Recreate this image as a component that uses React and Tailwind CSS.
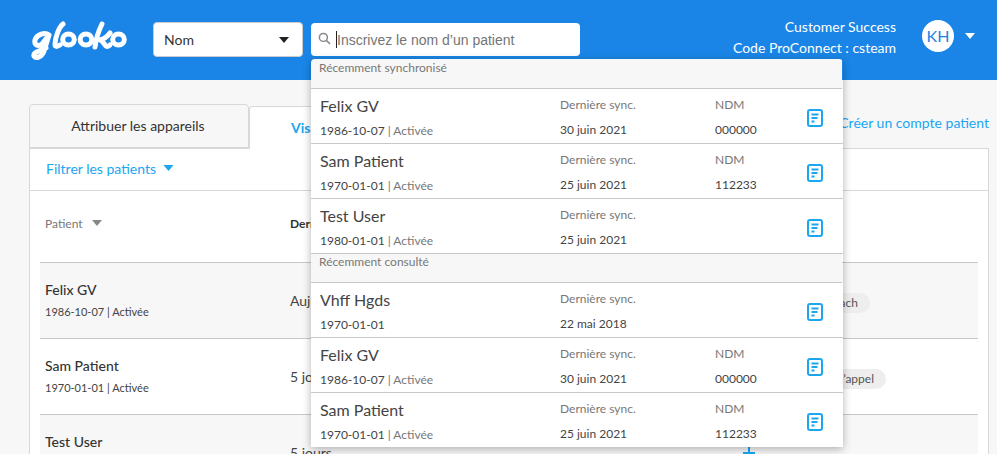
const Caret = ({ className }) => (
  <svg viewBox="0 0 10 6" className={className}><path d="M0 0h10L5 6z" fill="currentColor" /></svg>
);

const Logo = () => (
  <svg width="98" height="46" viewBox="0 0 98 46" fill="none" stroke="#fff" strokeWidth="5" strokeLinecap="round" strokeLinejoin="round">
    <path d="M20 20c-4-3-12-1-14 5-1 5 3 7 7 4l7-9-5 16c-2 6-8 8-10 5-1-3 4-5 12-8" />
    <path d="M34 9c-4 3-8 14-8 20 0 3 2 3 5 1" />
    <ellipse cx="39.5" cy="24.5" rx="5.8" ry="5.4" />
    <ellipse cx="57" cy="24.5" rx="5.8" ry="5.4" />
    <path d="M73 9c-3 6-6 15-7 23M81 18c-3 4-6 6-10 7 3 1 4 4 6 6 2 1 3 0 4-1" />
    <ellipse cx="89.5" cy="24.5" rx="5.8" ry="5.4" />
  </svg>
);

const NoteIcon = () => (
  <svg width="16" height="18" viewBox="0 0 16 18" fill="none" className="shrink-0">
    <rect x="1" y="1" width="14" height="16" rx="2" stroke="#1ba6f2" strokeWidth="2" />
    <path d="M4.5 5.5h7M4.5 9h6M4.5 12.5h3" stroke="#1ba6f2" strokeWidth="1.8" />
  </svg>
);

const SearchRow = ({ name, dob, status, date, ndm }) => (
  <div className="flex h-[55px] w-[532px] border-b border-[#c8c8c8] bg-white pl-[9px] last:h-[54px] last:border-b-0">
    <div className="w-[240px] pt-[7px]">
      <div className="text-[16px] leading-[20px] text-[#444]">{name}</div>
      <div className="mt-[7px] text-[12px] leading-[16px] text-[#444]">
        {dob}
        {status && <span className="text-[#777]"> | {status}</span>}
      </div>
    </div>
    <div className="w-[155px] pt-[7px]">
      <div className="text-[12px] leading-[18px] text-[#777]">Dernière sync.</div>
      <div className="mt-[8px] text-[12px] leading-[16px] text-[#444]">{date}</div>
    </div>
    <div className="w-[92px] pt-[7px]">
      {ndm && <div className="text-[12px] leading-[18px] text-[#777]">NDM</div>}
      {ndm && <div className="mt-[8px] text-[12px] leading-[16px] text-[#444]">{ndm}</div>}
    </div>
    <div className="pt-[20px]"><NoteIcon /></div>
  </div>
);

const SectionHead = ({ children, className }) => (
  <div className={`w-[531px] border-b border-[#c8c8c8] bg-[#f7f7f7] pl-[8px] text-[12px] text-[#777] ${className}`}>
    {children}
  </div>
);

const TableRow = ({ name, sub, last, chip, chipClass, shaded, plus }) => (
  <div className={`flex h-[76px] border-b border-[#c8c8c8] pl-[5px] ${shaded ? "bg-[#f7f7f7]" : "bg-white"}`}>
    <div className="w-[245px] pt-[17px]">
      <div className="text-[14px] font-medium leading-[20px] text-[#333]">{name}</div>
      <div className="mt-[3px] text-[11px] leading-[18px] text-[#444]">{sub}</div>
    </div>
    <div className="pt-[28px] text-[14px] leading-[20px] text-[#444]">{last}</div>
    {chip && (
      <div className={`ml-auto mt-[30px] h-[20px] rounded-full bg-[#eeeeee] pl-[16px] pr-[12px] text-[12px] leading-[20px] text-[#555] ${chipClass}`}>
        {chip}
      </div>
    )}
    {plus && (
      <svg width="12" height="12" viewBox="0 0 12 12" className="ml-auto mr-[223px] mt-[32px]" stroke="#1ba6f2" strokeWidth="2">
        <path d="M0 6h12M6 0v12" />
      </svg>
    )}
  </div>
);

export default function App() {
  return (
    <div className="relative h-[454px] w-[997px] overflow-hidden bg-[#f7f7f7] font-['Lato',sans-serif]">
      <header className="flex h-[80px] items-start bg-[#1a85e6] text-white">
        <div className="ml-[29px] mt-[15px] w-[124px]"><Logo /></div>
        <div className="mt-[22px] flex h-[35px] w-[150px] items-center justify-between rounded-[4px] border border-[#cccccc] bg-white pl-[10px] pr-[13px] text-[14px] text-[#333]">
          Nom
          <Caret className="h-[6px] w-[10px] text-[#222]" />
        </div>
        <div className="ml-[8px] mt-[23px] flex h-[33px] w-[269px] items-center rounded-[4px] bg-white pl-[7px]">
          <svg width="13" height="13" viewBox="0 0 14 14" fill="none" stroke="#888" strokeWidth="1.6" className="mb-[2px]"><circle cx="5.8" cy="5.8" r="4.3" /><path d="M9 9l4 4" /></svg>
          <span className="ml-[5px] h-[17px] w-px bg-[#222]" />
          <span className="pt-[2px] font-['Liberation_Sans',sans-serif] text-[14px] text-[#757575]">Inscrivez le nom d’un patient</span>
        </div>
        <div className="ml-auto mt-[16px] text-right text-[14px] leading-[21px]">
          <div>Customer Success</div>
          <div>Code ProConnect : csteam</div>
        </div>
        <div className="ml-[26px] mt-[20px] flex h-[32px] w-[32px] items-center justify-center rounded-full bg-white text-[16px] text-[#1a85e6]">KH</div>
        <Caret className="ml-[11px] mr-[22px] mt-[33px] h-[6px] w-[10px] text-white" />
      </header>

      <main className="pl-[29px] pr-[8px] pt-[24px]">
        <div className="relative flex h-[44px] items-end">
          <div className="flex h-[44px] w-[220px] items-center justify-center rounded-t-[4px] border border-[#d8d8d8] bg-[#f7f7f7] pb-[2px] pr-[2px] text-[14px] text-[#333]">
            Attribuer les appareils
          </div>
          <div className="relative top-px flex h-[43px] w-[320px] items-center rounded-t-[4px] border border-b-0 border-[#d8d8d8] bg-white pb-[2px] pl-[41px] text-[14px] font-bold text-[#1ba6f2]">
            Visualiser les patients
          </div>
          <a className="absolute right-0 top-[8px] text-[14px] text-[#1ba6f2]">Créer un compte patient</a>
        </div>
        <section className="h-[400px] w-[960px] border border-[#d8d8d8] bg-white">
          <div className="flex h-[42px] items-center gap-[7px] border-b border-[#d8d8d8] pb-[2px] pl-[16px] text-[14px] text-[#1ba6f2]">
            Filtrer les patients
            <Caret className="mb-[2px] h-[6px] w-[11px]" />
          </div>
          <div className="mx-[10px]">
            <div className="flex h-[72px] items-center border-b border-[#c8c8c8] pb-[6px] pl-[5px] text-[12px]">
              <span className="flex w-[245px] items-center gap-[9px] text-[#777]">
                Patient
                <Caret className="mb-[2px] h-[6px] w-[10px] text-[#888]" />
              </span>
              <span className="font-bold text-[#333]">Dernière sync.</span>
            </div>
            <TableRow shaded name="Felix GV" sub="1986-10-07 | Activée" last="Aujourd’hui" chip="Coach" chipClass="mr-[108px]" />
            <TableRow name="Sam Patient" sub="1970-01-01 | Activée" last="5 jours" chip="Rappel d’appel" chipClass="mr-[92px]" />
            <TableRow shaded plus name="Test User" sub="1980-01-01 | Activée" last="5 jours" />
          </div>
        </section>
      </main>

      <div className="absolute left-[311px] top-[59px] w-[532px] overflow-hidden rounded-t-[4px] shadow-[0_2px_8px_rgba(0,0,0,0.3)]">
        <SectionHead className="h-[30px] leading-[18px]">Récemment synchronisé</SectionHead>
        <SearchRow name="Felix GV" dob="1986-10-07" status="Activée" date="30 juin 2021" ndm="000000" />
        <SearchRow name="Sam Patient" dob="1970-01-01" status="Activée" date="25 juin 2021" ndm="112233" />
        <SearchRow name="Test User" dob="1980-01-01" status="Activée" date="25 juin 2021" />
        <SectionHead className="h-[29px] leading-[15px]">Récemment consulté</SectionHead>
        <SearchRow name="Vhff Hgds" dob="1970-01-01" date="22 mai 2018" />
        <SearchRow name="Felix GV" dob="1986-10-07" status="Activée" date="30 juin 2021" ndm="000000" />
        <SearchRow name="Sam Patient" dob="1970-01-01" status="Activée" date="25 juin 2021" ndm="112233" />
      </div>
    </div>
  );
}
